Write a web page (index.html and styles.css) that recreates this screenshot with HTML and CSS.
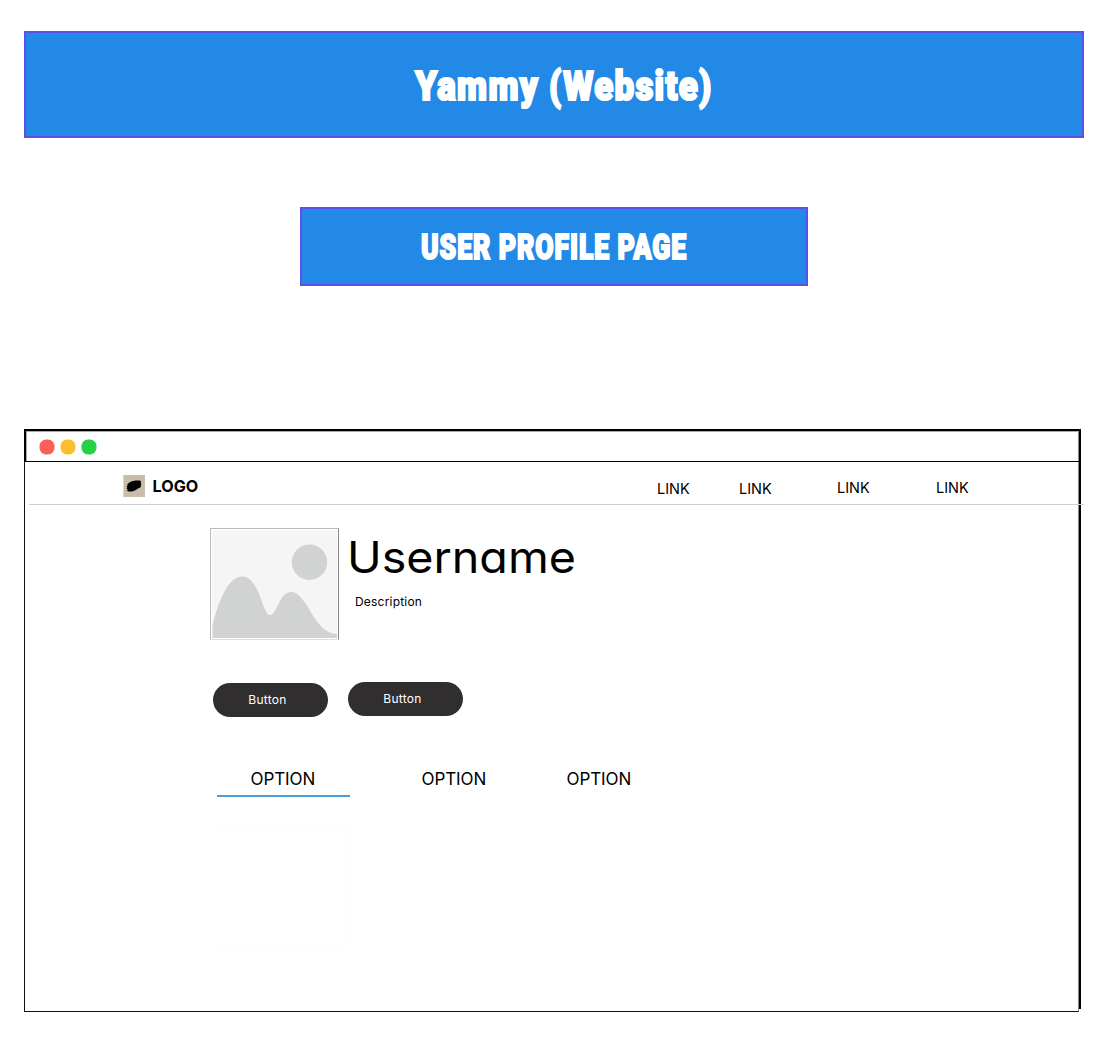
FILE: index.html
```html
<!DOCTYPE html>
<html lang="en">
<head>
<meta charset="utf-8">
<title>Yammy (Website)</title>
<link rel="stylesheet" href="styles.css">
</head>
<body>
<header class="banner"><h1 class="banner-title">Yammy (Website)</h1></header>
<section class="subtitle"><h2 class="subtitle-text">USER PROFILE PAGE</h2></section>
<main class="window">
  <div class="titlebar">
    <span class="dot red"></span><span class="dot yellow"></span><span class="dot green"></span>
  </div>
  <div class="content">
    <nav class="nav">
      <svg class="logo-mark" viewBox="0 0 22 22" width="22" height="22">
        <rect x=".4" width="21.600" height="22" fill="#c7bda9"/>
        <path d="M4.200 9.500L6 7.700L9 6.300L12.500 5.600L17 5.600L18.300 6.800L17.500 7.800L18.400 8.800L17.600 9.900L18.300 11L17.200 12.500L14.500 13.800L12.500 15.300L9 16.500L5.500 16.500L3.900 15.400L4.800 14.400L3.500 13.400L4.400 12.400L3.400 11.400L4.700 10.500Z" fill="#000"/>
      </svg>
      <span class="logo-text">LOGO</span>
      <div class="links">
        <a class="link low">LINK</a><a class="link low">LINK</a><a class="link">LINK</a><a class="link">LINK</a>
      </div>
    </nav>
    <section class="profile">
      <div class="avatar">
        <svg class="picture" viewBox="0 0 125 108" width="125" height="108">
          <rect x=".5" width="124.500" height="108" fill="#f5f5f5"/>
          <circle cx="97.500" cy="32.200" r="17.700" fill="#d1d3d2"/>
          <path d="M.5 108V96C6 72 16 46.500 30 46.500C48 46.500 50 85 58 85C65 85 67 62 79.500 62C95 62 102 104 125 104V108Z" fill="#d1d3d2"/>
        </svg>
      </div>
      <div class="identity">
        <div class="username">Username</div>
        <div class="description">Description</div>
      </div>
    </section>
    <div class="actions">
      <button class="button first">Button</button>
      <button class="button">Button</button>
    </div>
    <div class="tabs">
      <span class="tab active">OPTION</span><span class="tab">OPTION</span><span class="tab">OPTION</span>
    </div>
    <div class="panel"></div>
  </div>
</main>
</body>
</html>
```
FILE: styles.css
```css
* { box-sizing: border-box; }
body {
  margin: 0;
  padding: 31px 18px 0 24px;
  height: 1038px;
  overflow: hidden;
  background: #fff;
  color: #000;
  font-family: Inter, "Open Sans", sans-serif;
  font-feature-settings: "cv11";
}
h1, h2 { margin: 0; white-space: nowrap; }
.banner, .subtitle {
  display: flex;
  align-items: center;
  justify-content: center;
  background: #2289e6;
  border: 2px solid #5b50e8;
  color: #fff;
  font-family: Roboto, sans-serif;
}
.banner { height: 107px; padding: 3px 0 0 19px; }
.banner-title {
  font-size: 41px;
  font-weight: 900;
  line-height: 50px;
  letter-spacing: 1.500px;
  -webkit-text-stroke: 2.200px #fff;
  transform: scaleX(.85);
}
.subtitle { width: 508px; height: 79px; margin: 69px 0 0 276px; padding-top: 3px; }
.subtitle-text {
  font-size: 35px;
  font-weight: 900;
  line-height: 42px;
  letter-spacing: 1.200px;
  -webkit-text-stroke: 2px #fff;
  transform: scaleX(.76);
}
.window {
  width: 1057px;
  height: 583px;
  margin-top: 143px;
  background: linear-gradient(#000, #000) right top / 2px 580px no-repeat;
}
.titlebar {
  display: flex;
  gap: 6px;
  height: 33px;
  padding: 8px 0 0 13px;
  border: solid #000;
  border-width: 2px 2px 1px 2px;
  box-shadow: inset 1px 1px #aaa, inset -1px 0 #888;
}
.dot { width: 15px; height: 15px; border-radius: 6.500px; transform: translate(.5px, .5px); }
.red { background: #fb6058; }
.yellow { background: #fcbd2f; }
.green { background: #27d045; }
.content {
  width: 1055px;
  height: 550px;
  border: solid #111;
  border-width: 0 1px 1px 1px;
  border-right-color: #888;
}
.nav {
  display: flex;
  width: 1055px;
  height: 43px;
  margin-left: 4px;
  padding: 13px 0 0 94px;
  border-bottom: 1px solid #d0d0d0;
}
.logo-mark { flex: none; }
.logo-text {
  width: 47px;
  margin: 0 0 0 7px;
  padding-left: .5px;
  font-size: 16.200px;
  font-weight: 700;
  line-height: 23px;
}
.links { display: grid; grid-template-columns: 82px 98px 99px 60px; margin-left: 458px; }
.link { font-size: 14.500px; line-height: 26px; }
.low { padding-top: 1px; }
.profile { display: flex; margin: 23px 0 0 185px; }
.avatar {
  width: 129px;
  height: 112px;
  padding: 1px;
  border: 1px solid #bbb;
  border-right-color: #888;
  border-bottom-color: #ddd;
}
.picture { display: block; }
.identity { padding-left: 9px; }
.username {
  height: 66px;
  margin-left: -1px;
  font-size: 44px;
  line-height: 58px;
  transform: scaleX(1.06);
  transform-origin: left;
}
.description { padding-left: 7px; font-size: 12px; line-height: 16px; letter-spacing: .2px; }
.actions { display: flex; gap: 20px; margin: 42px 0 0 188px; }
.button {
  width: 115px;
  height: 34px;
  padding: 0 6px 1px 0;
  border: 0;
  border-radius: 17px;
  background: #302e2f;
  color: #fff;
  font: inherit;
  font-size: 12px;
  letter-spacing: .3px;
}
.first { position: relative; top: 1px; }
.tabs { display: grid; grid-template-columns: 171px 145px 110px; margin: 45px 0 0 191.500px; }
.tab { height: 36px; padding-left: 34px; font-size: 17px; line-height: 36px; letter-spacing: -.1px; }
.active { width: 133px; border-bottom: 2px solid #4b9eda; }
.panel { width: 134px; height: 123px; margin: 27px 0 0 186px; border: 1px solid #fcfcfc; border-left: 0; }
```
